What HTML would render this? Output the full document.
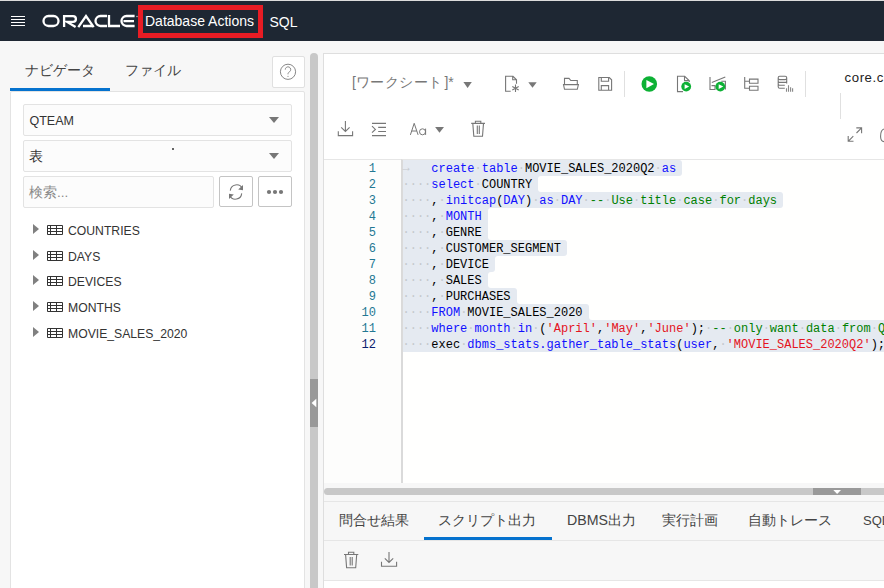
<!DOCTYPE html>
<html><head><meta charset="utf-8">
<style>
*{box-sizing:border-box;margin:0;padding:0}
html,body{width:884px;height:588px;overflow:hidden;background:#f7f7f7;font-family:"Liberation Sans",sans-serif;color:#333;position:relative}
.a{position:absolute}
#topline{left:0;top:0;width:884px;height:1px;background:#dcdcdc}
#hdr{left:0;top:1px;width:884px;height:40px;background:#1e2733}
.hb{position:absolute;left:11px;width:14px;height:1px;background:#fff}
#redbox{left:138px;top:5px;width:125px;height:33px;border:5px solid #e81c24}
#dbact{left:145px;top:13px;font-size:14px;color:#fff;white-space:nowrap}
#sql{left:269.5px;top:13.5px;font-size:14px;color:#fff}
.tab{position:absolute;font-size:14.2px;color:#444;white-space:nowrap}
#navul{left:10px;top:88px;width:100px;height:3px;background:#0572ce}
#help{left:271.5px;top:56px;width:33px;height:32px;background:#fff;border:1px solid #e0e0e0;border-radius:2px}
#lpanel{left:10px;top:91px;width:295px;height:510px;background:#fff;border:1px solid #e3e3e3;border-radius:2px}
.sel{position:absolute;left:23px;width:269px;height:32px;background:#fcfcfc;border:1px solid #e3e3e3;border-radius:2px}
.sel span{position:absolute;left:5.5px;top:8.5px;font-size:12.5px;color:#333;white-space:nowrap}
.caret{position:absolute;width:0;height:0;border-left:5px solid transparent;border-right:5px solid transparent;border-top:6px solid #777}
.btn{position:absolute;width:34px;height:31px;background:#fff;border:1px solid #c4c4c4;border-radius:2px}
.tri{position:absolute;left:33px;width:0;height:0;border-top:5.5px solid transparent;border-bottom:5.5px solid transparent;border-left:6px solid #808080}
.tname{position:absolute;left:68px;font-size:12.2px;color:#333;white-space:nowrap;transform:scaleY(1.1);transform-origin:0 0}
#vsplit{left:310px;top:53px;width:8px;height:540px;background:#c8c8c8;border-radius:4px 4px 0 0}
#vhandle{left:310px;top:379px;width:8px;height:48px;background:#999}
#rpanel{left:323px;top:53px;width:570px;height:540px;background:#fff;border:1px solid #dedede}
svg{position:absolute;left:0;top:0;overflow:visible}
.ic{fill:none;stroke:#777;stroke-width:1.1}
#gutter{left:324px;top:159px;width:78px;height:324px;background:#fdfdfc;border-top:1px solid #e6e6e6}
#code{left:401px;top:159px;width:490px;height:324px;background:#fffffe;border-left:2px solid #dadada;border-top:1px solid #e6e6e6;overflow:hidden}
.ln{position:absolute;margin-top:1px;left:324px;width:52px;text-align:right;font-family:"Liberation Mono",monospace;font-size:12px;line-height:16px;color:#237893}
.sl{position:absolute;background:#e5eaf1;height:16px}
.cl{position:absolute;margin-top:1px;left:402.5px;font-family:"Liberation Mono",monospace;font-size:12px;line-height:16px;white-space:pre;color:#000}
.w{color:#c4c8cc}
.k{color:#1010ff}
.f{color:#3030c0}
.s{color:#e4141e}
.c{color:#008000}
#hsplitbg{left:324px;top:483px;width:570px;height:19px;background:#f7f7f7;border-bottom:1px solid #e6e6e6}
#hsplit{left:324px;top:488px;width:570px;height:7px;background:#c8c8c8;border-radius:3.5px 0 0 3.5px}
#hhandle{left:813px;top:488px;width:48px;height:7px;background:#999}
#rtabs{left:324px;top:502px;width:570px;height:39px;background:#f7f7f7;border-bottom:1px solid #e6e6e6}
.rt{position:absolute;top:511px;font-size:14.2px;color:#444;white-space:nowrap}
#rul{left:424px;top:537px;width:128px;height:3px;background:#0572ce}
#rtool{left:324px;top:541px;width:570px;height:40px;background:#f7f7f7;border-bottom:1px solid #e6e6e6}
#rwhite{left:324px;top:581px;width:570px;height:10px;background:#fff}
</style></head><body>
<div class="a" id="topline"></div>
<div class="a" id="hdr">
  <div class="hb" style="top:15px"></div><div class="hb" style="top:18px"></div><div class="hb" style="top:21px"></div><div class="hb" style="top:24px"></div>
</div>
<svg width="884" height="41" viewBox="0 0 884 41"><g fill="none" stroke="#fff" stroke-width="2.3">
<rect x="43.5" y="16" width="15" height="10" rx="5"/>
<path d="M64.1,27 V16.1 H73 A2.9,2.9 0 0 1 73,21.9 H67.2 L75.6,27"/>
<path d="M78.3,27.2 L86,16 L93.7,27.2 M83,26 H93"/>
<path d="M107,16 H100.5 A5,5 0 0 0 100.5,26 H107"/>
<path d="M109,15 V26 H120"/>
<path d="M134.6,16 H126.5 A5,5 0 0 0 126.5,26 H134.6 M123.5,21.1 H134"/>
</g><circle cx="137" cy="16.5" r="0.8" fill="#bbb"/></svg>
<div class="a" id="redbox"></div>
<div class="a" id="dbact">Database Actions</div>
<div class="a" id="sql">SQL</div>

<div class="tab" style="left:25px;top:61px">ナビゲータ</div>
<div class="tab" style="left:125px;top:61px">ファイル</div>
<div class="a" id="navul"></div>
<div class="a" id="help"></div>
<svg width="884" height="588"><circle cx="288" cy="71.8" r="7.6" fill="none" stroke="#888" stroke-width="1"/>
<path d="M285.3,69.6 A2.7,2.7 0 1 1 289.6,71.7 C288.4,72.5 288,73 288,74.3" fill="none" stroke="#888" stroke-width="1"/><circle cx="288" cy="76.3" r="0.6" fill="#888"/></svg>
<div class="a" id="lpanel"></div>
<div class="sel" style="top:104px"><span>QTEAM</span><div class="caret" style="left:245px;top:12px"></div></div>
<div class="sel" style="top:140px"><span style="top:6.5px;left:5px;font-size:14px">表</span><div class="caret" style="left:245px;top:12px"></div></div>
<div class="a" style="left:172px;top:148px;width:2px;height:2px;background:#333;border-radius:1px"></div>
<div class="sel" style="top:176px;width:191px"><span style="color:#8a8a8a;top:6.5px;left:5px;font-size:13.5px">検索...</span></div>
<div class="btn" style="left:219px;top:176px"></div>
<div class="btn" style="left:258px;top:176px"></div>
<svg width="884" height="588"><g fill="none" stroke="#777" stroke-width="1.1">
<path d="M242.3,188.5 A6.3,6.3 0 0 0 230.3,190.6"/><path d="M229.7,195.5 A6.3,6.3 0 0 0 241.7,193.4"/></g>
<path d="M243,185 L243,190.2 L238.2,189.6 Z" fill="#777"/><path d="M229,199 L229,193.8 L233.8,194.4 Z" fill="#777"/>
<circle cx="269" cy="192" r="2.1" fill="#777"/><circle cx="275" cy="192" r="2.1" fill="#777"/><circle cx="281" cy="192" r="2.1" fill="#777"/>
</svg>

<div class="tri" style="top:223.5px"></div><div class="tname" style="top:223.2px">COUNTRIES</div>
<div class="tri" style="top:249.5px"></div><div class="tname" style="top:249.2px">DAYS</div>
<div class="tri" style="top:274.5px"></div><div class="tname" style="top:274.2px">DEVICES</div>
<div class="tri" style="top:300.5px"></div><div class="tname" style="top:300.2px">MONTHS</div>
<div class="tri" style="top:326.5px"></div><div class="tname" style="top:326.2px">MOVIE_SALES_2020</div>
<svg width="884" height="588"><g fill="none" stroke="#333" stroke-width="1">
<path d="M47.5,225.5 H62.5 V234.5 H47.5 Z M47.5,228.5 H62.5 M47.5,231.5 H62.5 M50.5,225.5 V234.5 M56.5,225.5 V234.5"/>
<path d="M47.5,251.5 H62.5 V260.5 H47.5 Z M47.5,254.5 H62.5 M47.5,257.5 H62.5 M50.5,251.5 V260.5 M56.5,251.5 V260.5"/>
<path d="M47.5,276.5 H62.5 V285.5 H47.5 Z M47.5,279.5 H62.5 M47.5,282.5 H62.5 M50.5,276.5 V285.5 M56.5,276.5 V285.5"/>
<path d="M47.5,302.5 H62.5 V311.5 H47.5 Z M47.5,305.5 H62.5 M47.5,308.5 H62.5 M50.5,302.5 V311.5 M56.5,302.5 V311.5"/>
<path d="M47.5,328.5 H62.5 V337.5 H47.5 Z M47.5,331.5 H62.5 M47.5,334.5 H62.5 M50.5,328.5 V337.5 M56.5,328.5 V337.5"/>
</g></svg>

<div class="a" id="vsplit"></div>
<div class="a" id="vhandle"></div>
<svg width="884" height="588"><path d="M316.3,398.8 V407.2 L311.6,403 Z" fill="#fff"/></svg>
<div class="a" id="rpanel"></div>

<!-- toolbar row 1 -->
<div class="a" style="left:352px;top:74px;font-size:14px;color:#777;white-space:nowrap">[<span style="letter-spacing:0.5px">ワークシート</span><span style="margin-left:1.5px">]*</span></div>
<svg width="884" height="588">
<g fill="#777"><path d="M463.4,82 H471.8 L467.6,87.9 Z"/><path d="M528.3,82.2 H536.7 L532.5,87.8 Z"/><path d="M435.1,127 H444 L439.5,132.8 Z"/></g>
<g class="ic">
<!-- new file -->
<path d="M510.7,91.3 H505.6 V76.3 H513 L516.5,79.8 V83.7 M512.7,76.3 V79.8 H516.5"/>
<path d="M515.5,84.6 V92 M512.3,86.5 L518.7,90.1 M512.3,90.1 L518.7,86.5"/>
<!-- folder -->
<path d="M564.5,84.6 V78.4 H569 L570.8,80.5 H577.3 V84.6"/>
<path d="M563.5,84.6 H578.4 L577.3,89.3 H564.5 Z"/>
<!-- save -->
<path d="M598.8,77.5 H609.3 L611.6,79.8 V90.3 H598.8 Z M601.3,77.5 V81.2 H608.6 V77.5 M601.3,90.3 V85.6 H608.6 V90.3"/>
</g>
<rect x="624" y="71" width="1" height="26" fill="#e0e0e0"/>
<circle cx="649.3" cy="84" r="7.8" fill="#0db135"/><path d="M646.4,80 L654,84.1 L646.4,88.3 Z" fill="#fff"/>
<g class="ic">
<path d="M683,91.6 H677.5 V76.3 H684.7 L689.3,80.8 V82 M684.5,76.3 V80.6 H689.3"/>
<path d="M710,77 V89.5 H715 V85.6 H711.5 M711.8,82.5 L725.3,77 M721.3,81.2 H725.4 V89.5"/>
<path d="M744.7,77 V88.3 H749.5 M744.7,81.2 H749.5 M749.5,79.1 H758 V83.2 H749.5 Z M749.5,86.3 H758 V90.3 H749.5 Z"/>
<path d="M778.2,86.8 V77.8 Q778.2,76.3 779.7,76.3 H785.2 Q786.7,76.3 786.7,77.8 V83.6 M778.2,86.8 Q778.2,88.3 779.7,88.3 H784.8 M778.2,78.1 Q778.2,79.6 779.7,79.6 H785.2 Q786.7,79.6 786.7,78.1 M778.2,80.9 Q778.2,82.4 779.7,82.4 H785.2 Q786.7,82.4 786.7,80.9 M778.2,83.8 Q778.2,85.3 779.7,85.3 H784.8"/>
<path d="M786.5,91.8 V88.3 M788.5,91.8 V85.3 M790.6,91.8 V87.3 M792.6,91.8 V88.3" stroke="#888"/>
</g>
<circle cx="686.2" cy="86.6" r="4.9" fill="#0db135"/><path d="M684.6,84.2 L689.2,86.6 L684.6,89 Z" fill="#fff"/>
<circle cx="720.3" cy="86.6" r="4.9" fill="#0db135"/><path d="M718.7,84.2 L723.3,86.6 L718.7,89 Z" fill="#fff"/>
<rect x="805" y="71" width="1" height="26" fill="#e0e0e0"/>
<rect x="840" y="93" width="1" height="26" fill="#e0e0e0"/>
<!-- row 2 -->
<g class="ic">
<path d="M345.4,121 V131.5 M341.2,127.3 L345.4,131.5 L349.6,127.3 M338.3,131.3 V135.6 H352.6 V131.3"/>
<path d="M372,123.4 H386 M378.2,127.4 H386 M378.2,131.5 H386 M372,135.6 H386 M372,126.2 L375.4,129.4 L372,132.7"/>
<path d="M410.4,134.9 L414.2,123.3 L418.1,134.9 M411.7,131 H416.8" stroke-width="1"/>
<circle cx="422.5" cy="131.8" r="3" stroke-width="1"/><path d="M425.6,128.6 V134.9" stroke-width="1"/>
<path d="M471.2,123.4 H485 M475.4,123.4 V121.2 H480.8 V123.4 M472.8,123.4 L473.8,136.3 H482.5 L483.5,123.4 M477.3,125.5 V134 M479.3,125.5 V134"/>
<path d="M848.2,141.3 L853.3,136.2 M848.2,136 V141.3 H853.5 M856.5,133 L861.6,127.9 M856.3,127.9 H861.6 V133.2"/>
</g>
<path d="M884,129 C881,130 880.5,134 880.6,137 C880.8,140.5 882.5,141.6 884,141.6" fill="none" stroke="#777" stroke-width="1.1"/>
</svg>
<div class="a" style="left:844.5px;top:70px;font-size:13.2px;letter-spacing:0.6px;color:#222;white-space:nowrap">core.co</div>

<!-- editor -->
<div class="a" id="gutter"></div>
<div class="a" id="code"></div>
<div class="sl" style="left:403px;top:160px;width:279.0px;border-radius:0 3px 3px 0"></div>
<div class="sl" style="left:403px;top:176px;width:135.0px;border-radius:0 0px 0px 0"></div>
<div class="sl" style="left:538.0px;top:176px;width:3px;height:3px"></div>
<div class="sl" style="left:538.0px;top:189px;width:3px;height:3px"></div>
<div class="a" style="background:#fffffe;left:538.0px;top:176px;width:4px;height:16px;border-radius:3px 0 0 3px"></div>
<div class="sl" style="left:403px;top:192px;width:380.0px;border-radius:0 3px 3px 0"></div>
<div class="sl" style="left:403px;top:208px;width:84.5px;border-radius:0 0px 0px 0"></div>
<div class="sl" style="left:487.5px;top:208px;width:3px;height:3px"></div>
<div class="a" style="background:#fffffe;left:487.5px;top:208px;width:4px;height:16px;border-radius:3px 0 0 0px"></div>
<div class="sl" style="left:403px;top:224px;width:84.5px;border-radius:0 0px 0px 0"></div>
<div class="sl" style="left:487.5px;top:237px;width:3px;height:3px"></div>
<div class="a" style="background:#fffffe;left:487.5px;top:224px;width:4px;height:16px;border-radius:0px 0 0 3px"></div>
<div class="sl" style="left:403px;top:240px;width:164.0px;border-radius:0 3px 3px 0"></div>
<div class="sl" style="left:403px;top:256px;width:92.0px;border-radius:0 0px 3px 0"></div>
<div class="sl" style="left:495.0px;top:256px;width:3px;height:3px"></div>
<div class="a" style="background:#fffffe;left:495.0px;top:256px;width:4px;height:16px;border-radius:3px 0 0 0px"></div>
<div class="sl" style="left:403px;top:272px;width:84.5px;border-radius:0 0px 0px 0"></div>
<div class="sl" style="left:487.5px;top:272px;width:3px;height:3px"></div>
<div class="sl" style="left:487.5px;top:285px;width:3px;height:3px"></div>
<div class="a" style="background:#fffffe;left:487.5px;top:272px;width:4px;height:16px;border-radius:3px 0 0 3px"></div>
<div class="sl" style="left:403px;top:288px;width:113.5px;border-radius:0 3px 0px 0"></div>
<div class="sl" style="left:516.5px;top:301px;width:3px;height:3px"></div>
<div class="a" style="background:#fffffe;left:516.5px;top:288px;width:4px;height:16px;border-radius:0px 0 0 3px"></div>
<div class="sl" style="left:403px;top:304px;width:185.5px;border-radius:0 3px 0px 0"></div>
<div class="sl" style="left:588.5px;top:317px;width:3px;height:3px"></div>
<div class="a" style="background:#fffffe;left:588.5px;top:304px;width:4px;height:16px;border-radius:0px 0 0 3px"></div>
<div class="sl" style="left:403px;top:320px;width:497.0px;border-radius:0 3px 0px 0"></div>
<div class="sl" style="left:403px;top:336px;width:497.0px;border-radius:0 0px 3px 0"></div>
<div class="ln" style="top:160px">1</div>
<div class="ln" style="top:176px">2</div>
<div class="ln" style="top:192px">3</div>
<div class="ln" style="top:208px">4</div>
<div class="ln" style="top:224px">5</div>
<div class="ln" style="top:240px">6</div>
<div class="ln" style="top:256px">7</div>
<div class="ln" style="top:272px">8</div>
<div class="ln" style="top:288px">9</div>
<div class="ln" style="top:304px">10</div>
<div class="ln" style="top:320px">11</div>
<div class="ln" style="top:336px;color:#0b216f">12</div>
<div class="cl" style="top:160px"><span class="w" style="position:relative;top:-1px">→</span>   <span class="k">create</span><span class="w">·</span><span class="k">table</span><span class="w">·</span>MOVIE_SALES_2020Q2<span class="w">·</span><span class="k">as</span></div>
<div class="cl" style="top:176px"><span class="w">····</span><span class="k">select</span><span class="w">·</span>COUNTRY</div>
<div class="cl" style="top:192px"><span class="w">····</span>,<span class="w">·</span><span class="k">initcap</span>(<span class="k">DAY</span>)<span class="w">·</span><span class="k">as</span><span class="w">·</span><span class="k">DAY</span><span class="w">·</span><span class="c">--</span><span class="w">·</span><span class="c">Use</span><span class="w">·</span><span class="c">title</span><span class="w">·</span><span class="c">case</span><span class="w">·</span><span class="c">for</span><span class="w">·</span><span class="c">days</span></div>
<div class="cl" style="top:208px"><span class="w">····</span>,<span class="w">·</span><span class="k">MONTH</span></div>
<div class="cl" style="top:224px"><span class="w">····</span>,<span class="w">·</span>GENRE</div>
<div class="cl" style="top:240px"><span class="w">····</span>,<span class="w">·</span>CUSTOMER_SEGMENT</div>
<div class="cl" style="top:256px"><span class="w">····</span>,<span class="w">·</span>DEVICE</div>
<div class="cl" style="top:272px"><span class="w">····</span>,<span class="w">·</span>SALES</div>
<div class="cl" style="top:288px"><span class="w">····</span>,<span class="w">·</span>PURCHASES</div>
<div class="cl" style="top:304px"><span class="w">····</span><span class="k">FROM</span><span class="w">·</span>MOVIE_SALES_2020</div>
<div class="cl" style="top:320px"><span class="w">····</span><span class="k">where</span><span class="w">·</span><span class="k">month</span><span class="w">·</span><span class="k">in</span><span class="w">·</span>(<span class="s">&#x27;April&#x27;</span>,<span class="s">&#x27;May&#x27;</span>,<span class="s">&#x27;June&#x27;</span>);<span class="w">·</span><span class="c">--</span><span class="w">·</span><span class="c">only</span><span class="w">·</span><span class="c">want</span><span class="w">·</span><span class="c">data</span><span class="w">·</span><span class="c">from</span><span class="w">·</span><span class="c">Q2</span></div>
<div class="cl" style="top:336px"><span class="w">····</span>exec<span class="w">·</span><span class="k">dbms_stats.gather_table_stats</span>(<span class="k">user</span>,<span class="w">·</span><span class="s">&#x27;MOVIE_SALES_2020Q2&#x27;</span>);</div>
<!--ENDCODE-->
<div class="a" id="hsplitbg"></div>
<div class="a" id="hsplit"></div>
<div class="a" id="hhandle"></div>
<svg width="884" height="588"><path d="M833.3,490 H841 L837.15,493.9 Z" fill="#fff"/></svg>
<div class="a" id="rtabs"></div>
<div class="rt" style="left:339px">問合せ結果</div>
<div class="rt" style="left:438px">スクリプト出力</div>
<div class="rt" style="left:567px">DBMS出力</div>
<div class="rt" style="left:662px">実行計画</div>
<div class="rt" style="left:748px">自動トレース</div>
<div class="rt" style="left:863px;font-size:13px;top:512.5px">SQL</div>
<div class="a" id="rul"></div>
<div class="a" id="rtool"></div>
<div class="a" id="rwhite"></div>
<svg width="884" height="588"><g class="ic" stroke="#888">
<path d="M344,554.5 H358.3 M348.5,554.5 V552.2 H353.8 V554.5 M345.6,554.5 L346.6,567.8 H355.7 L356.7,554.5 M350.2,557 V565.5 M352.2,557 V565.5"/>
<path d="M389,552 V562.5 M384.8,558.3 L389,562.5 L393.2,558.3 M381.5,561.8 V566.3 H396.6 V561.8"/>
</g></svg>

</body></html>
